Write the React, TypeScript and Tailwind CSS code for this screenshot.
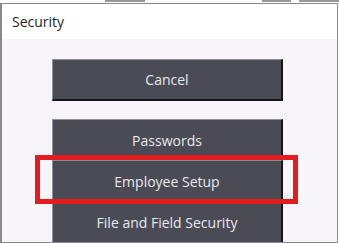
import React from "react";

const font = { fontFamily: '"Open Sans", "Noto Sans", sans-serif' };

function Btn({ label }: { label: string }) {
  return (
    <div className="h-[41px] flex items-center justify-center bg-[#4a4b55] text-[#e8e8ee] text-[14px] border-t border-t-[#8c8e96] border-l border-l-[#8e93a0] border-r-2 border-r-[#15161a]">
      {label}
    </div>
  );
}

function Frag({ w, ml }: { w: number; ml: number }) {
  return <div className="h-[2px] bg-[#6b6b70] opacity-70" style={{ width: w, marginLeft: ml }} />;
}

export default function App() {
  return (
    <div className="w-[339px] h-[243px] bg-white relative overflow-hidden" style={font}>
      <div className="h-[3px] flex items-start">
        <Frag w={40} ml={105} />
        <Frag w={30} ml={117} />
        <Frag w={40} ml={8} />
      </div>
      <div className="w-[338px] h-[240px] border-l-2 border-t border-r border-b border-[#8a8a8a] flex flex-col">
        <div className="h-[36px] bg-white flex items-center pl-[10px] text-[14px] text-[#1f1f1f]">
          Security
        </div>
        <div className="flex-1 bg-[#f7f5f9] pl-[50px] pt-[20px] flex flex-col">
          <div className="w-[231px] h-[42px] flex items-center justify-center bg-[#4a4b55] text-[#e8e8ee] text-[14px] border-t border-t-[#8c8e96] border-l border-l-[#8e93a0] border-r-2 border-r-[#15161a] border-b-2 border-b-[#15161a]">
            Cancel
          </div>
          <div className="w-[231px] mt-[18px] flex flex-col">
            <Btn label="Passwords" />
            <Btn label="Employee Setup" />
            <Btn label="File and Field Security" />
          </div>
        </div>
      </div>
      <div className="absolute left-[35px] top-[155px] w-[263px] h-[49px] border-[5px] border-[#e41c1f]" />
    </div>
  );
}
